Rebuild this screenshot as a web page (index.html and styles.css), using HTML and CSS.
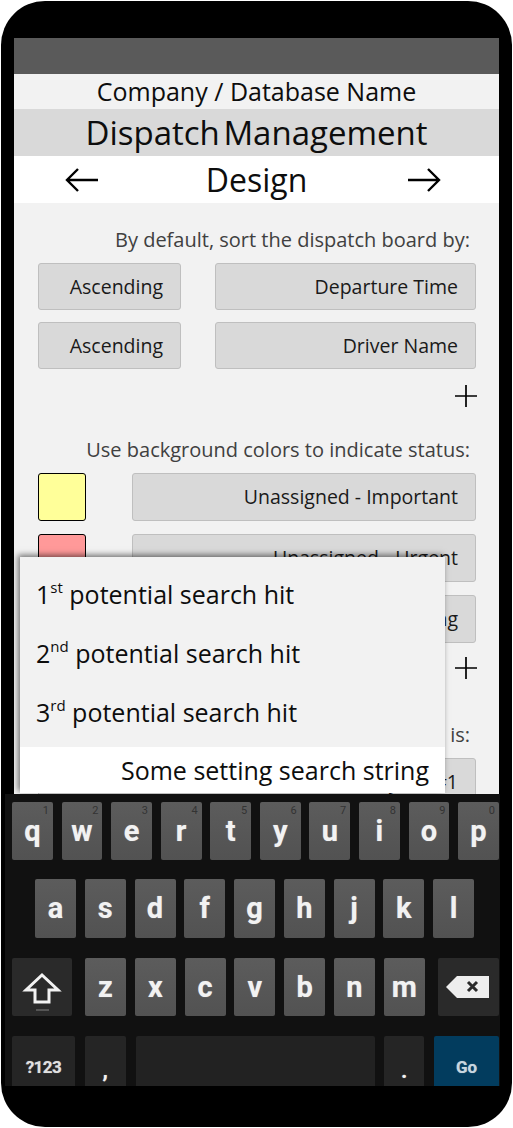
FILE: index.html
```html
<!DOCTYPE html>
<html>
<head>
<meta charset="utf-8">
<link rel="stylesheet" href="styles.css">
</head>
<body>
<div class="phone">
  <div class="screen">
    <div class="status"></div>
    <div class="company">Company / Database Name</div>
    <div class="app">Dispatch Management</div>
    <div class="nav">
      <svg class="arrow arrow-left" viewBox="0 0 34 26" width="34" height="26"><path d="M2 13 H33 M13 2 L2 13 L13 24" /></svg>
      <div class="nav-title">Design</div>
      <svg class="arrow arrow-right" viewBox="0 0 34 26" width="34" height="26"><path d="M1 13 H32 M21 2 L32 13 L21 24" /></svg>
    </div>
    <div class="content">
      <div class="label">By default, sort the dispatch board by:</div>
      <div class="sort-row">
        <div class="btn btn-order">Ascending</div>
        <div class="btn btn-field">Departure Time</div>
      </div>
      <div class="sort-row">
        <div class="btn btn-order">Ascending</div>
        <div class="btn btn-field">Driver Name</div>
      </div>
      <div class="add"><svg viewBox="0 0 24 24" width="24" height="24"><path d="M12 1 V23 M1 12 H23" /></svg></div>
      <div class="label label-2">Use background colors to indicate status:</div>
      <div class="color-row">
        <div class="swatch swatch-yellow"></div>
        <div class="btn btn-field">Unassigned - Important</div>
      </div>
      <div class="color-row">
        <div class="swatch swatch-red"></div>
        <div class="btn btn-field">Unassigned - Urgent</div>
      </div>
      <div class="color-row">
        <div class="swatch swatch-green"></div>
        <div class="btn btn-field">Assigned - Departing</div>
      </div>
      <div class="add add-2"><svg viewBox="0 0 24 24" width="24" height="24"><path d="M12 1 V23 M1 12 H23" /></svg></div>
      <div class="label label-3">Number of board columns is:</div>
      <div class="sort-row">
        <div class="btn btn-field">Layout #1</div>
      </div>
    </div>

    <div class="popup">
      <div class="hits">
        <div class="hit">1<sup>st</sup> potential search hit</div>
        <div class="hit">2<sup>nd</sup> potential search hit</div>
        <div class="hit">3<sup>rd</sup> potential search hit</div>
      </div>
      <div class="search">Some setting search string</div>
    </div>

    <div class="keyboard">
      <div class="kb-row kb-row-1">
        <div class="key">q<span class="hint">1</span></div>
        <div class="key">w<span class="hint">2</span></div>
        <div class="key">e<span class="hint">3</span></div>
        <div class="key">r<span class="hint">4</span></div>
        <div class="key">t<span class="hint">5</span></div>
        <div class="key">y<span class="hint">6</span></div>
        <div class="key">u<span class="hint">7</span></div>
        <div class="key">i<span class="hint">8</span></div>
        <div class="key">o<span class="hint">9</span></div>
        <div class="key">p<span class="hint">0</span></div>
      </div>
      <div class="kb-row kb-row-2">
        <div class="key">a</div>
        <div class="key">s</div>
        <div class="key">d</div>
        <div class="key">f</div>
        <div class="key">g</div>
        <div class="key">h</div>
        <div class="key">j</div>
        <div class="key">k</div>
        <div class="key">l</div>
      </div>
      <div class="kb-row kb-row-3">
        <div class="key key-dark key-shift">
          <svg viewBox="0 0 40 40" width="40" height="40"><path class="shift-arrow" d="M20 4 L36 19 H27 V31 H13 V19 H4 Z" /><path class="shift-bar" d="M14 39 H27" /></svg>
        </div>
        <div class="key">z</div>
        <div class="key">x</div>
        <div class="key">c</div>
        <div class="key">v</div>
        <div class="key">b</div>
        <div class="key">n</div>
        <div class="key">m</div>
        <div class="key key-dark key-back">
          <svg viewBox="0 0 44 22" width="44" height="22"><path class="back-shape" d="M0 11 L11 0 H43 V22 H11 Z" /><path class="back-x" d="M22 6 L31 15 M31 6 L22 15" /></svg>
        </div>
      </div>
      <div class="kb-row kb-row-4">
        <div class="key key-fn key-sym">?123</div>
        <div class="key key-fn key-comma">,</div>
        <div class="key key-fn key-space"></div>
        <div class="key key-fn key-period">.</div>
        <div class="key key-go">Go</div>
      </div>
    </div>
  </div>
</div>
</body>
</html>
```

FILE: styles.css
```css
* { box-sizing: border-box; }

html, body {
  margin: 0;
  padding: 0;
  background: #ffffff;
}

body {
  font-family: "Open Sans", "Noto Sans", sans-serif;
  color: #000;
}

.phone {
  margin: 1px 0 0 1px;
  width: 511px;
  height: 1126px;
  background: #000;
  border-radius: 44px;
  overflow: hidden;
  padding: 37px 0 0 13px;
}

.screen {
  position: relative;
  width: 485px;
  height: 1048px;
  background: #f2f2f2;
}

.status {
  height: 36px;
  background: #5a5a5a;
}

.company {
  height: 35px;
  line-height: 35px;
  background: #f2f2f2;
  text-align: center;
  font-size: 25px;
  color: #0d0d0d;
}

.app {
  height: 47px;
  line-height: 47px;
  background: #d9d9d9;
  text-align: center;
  font-size: 33px;
  word-spacing: -5px;
  color: #0d0d0d;
}

.nav {
  height: 47px;
  background: #fff;
  display: grid;
  grid-template-columns: 1fr auto 1fr;
  align-items: center;
}

.nav-title {
  font-size: 32px;
  line-height: 47px;
  color: #0d0d0d;
}

.arrow path {
  fill: none;
  stroke: #000;
  stroke-width: 2.4;
}

.arrow-left {
  margin-left: 51px;
}

.arrow-right {
  justify-self: end;
  margin-right: 58px;
}

.content {
  padding: 25px 23px 0 24px;
}

.label {
  text-align: right;
  padding-right: 6px;
  font-size: 20px;
  line-height: 24px;
  color: #404040;
  margin-bottom: 11px;
  white-space: nowrap;
}

.label-2 { margin-top: 30px; }
.label-3 { margin-top: 43px; }

.sort-row {
  display: flex;
  gap: 34px;
  height: 47px;
  margin-bottom: 12px;
}

.btn {
  background: #d9d9d9;
  border: 1px solid #bfbfbf;
  border-radius: 3px;
  text-align: right;
  padding-right: 17px;
  font-size: 19.5px;
  line-height: 45px;
  color: #1a1a1a;
  white-space: nowrap;
  overflow: hidden;
}

.btn-order { width: 143px; }
.btn-field { flex: 1; }

.add {
  height: 24px;
  margin-top: 15px;
  display: flex;
  justify-content: flex-end;
  margin-right: -2px;
}

.add svg path {
  fill: none;
  stroke: #000;
  stroke-width: 1.7;
}

.add-2 { margin-top: 13px; }

.color-row {
  display: flex;
  gap: 46px;
  height: 48px;
  margin-bottom: 13px;
}

.color-row .btn { line-height: 46px; }

.swatch {
  width: 48px;
  border: 1.5px solid #000;
  border-radius: 3px;
}

.swatch-yellow { background: #ffff99; }
.swatch-red { background: #ff9999; }
.swatch-green { background: #99ff99; }

/* search popup overlaid on the settings */
.popup {
  position: absolute;
  left: 6px;
  top: 519px;
  width: 425px;
  height: 236px;
  background: #f2f2f2;
  box-shadow: -2px -2px 6px rgba(0, 0, 0, 0.55);
  display: flex;
  flex-direction: column;
}

.hits {
  flex: 1;
  padding-top: 8px;
}

.hit {
  height: 59px;
  line-height: 59px;
  padding-left: 16px;
  font-size: 25px;
  color: #0d0d0d;
}

.hit sup {
  font-size: 15px;
  line-height: 0;
  vertical-align: 0;
  position: relative;
  top: -11px;
}

.search {
  height: 46px;
  line-height: 46px;
  background: #fff;
  text-align: right;
  padding-right: 16px;
  font-size: 25px;
  color: #0d0d0d;
}

/* on-screen keyboard */
.keyboard {
  position: absolute;
  left: -9px;
  top: 756px;
  width: 495px;
  height: 292px;
  background: #111;
  overflow: hidden;
  padding-top: 8px;
  font-family: Roboto, "Noto Sans", sans-serif;
}

.kb-row {
  display: flex;
  gap: 8.7px;
  height: 58px;
}

.kb-row-1 { margin: 0 1px 0 7px; }
.kb-row-2 { margin: 19px 0 0 30px; width: 439px; height: 59px; }
.kb-row-3 { margin: 20px 1px 0 7px; gap: 8.8px; }
.kb-row-4 { margin: 20px 1px 0 7px; gap: 9.75px; }

.key {
  position: relative;
  flex: 1;
  background: linear-gradient(#5c5c5c, #525252);
  border-radius: 2px;
  color: #f2f2f2;
  font-weight: 700;
  font-size: 29px;
  text-align: center;
  line-height: 58px;
  text-shadow: 0 0 1px rgba(255, 255, 255, 0.5);
}

.kb-row-3 .key { flex: 0 0 41px; }

.hint {
  position: absolute;
  top: 3px;
  right: 4px;
  font-size: 11px;
  line-height: 11px;
  font-weight: 400;
  color: #333;
  text-shadow: none;
}

.key-dark {
  background: #2a2a2a;
  display: flex;
  align-items: center;
  justify-content: center;
}

.kb-row-3 .key-shift { flex: 0 0 60px; margin-right: 4.2px; }
.kb-row-3 .key-back { flex: 0 0 61px; margin-left: 4.4px; }

.key-shift svg { margin-top: 8px; }

.shift-arrow {
  fill: none;
  stroke: #f2f2f2;
  stroke-width: 3;
  stroke-linejoin: miter;
}

.shift-bar {
  stroke: #555;
  stroke-width: 2;
}

.back-shape { fill: #eeeeee; }
.back-x {
  stroke: #2a2a2a;
  stroke-width: 3;
}

.key-fn {
  background: #252525;
  font-size: 17px;
  line-height: 58px;
}

.key-sym { flex: 0 0 63px; letter-spacing: -0.5px; color: #e0e0e0; padding-top: 2px; }
.key-comma { flex: 0 0 41px; font-size: 22px; line-height: 70px; }
.key-space { flex: 0 0 239px; background: #222; }
.key-period { flex: 0 0 40px; font-size: 22px; line-height: 70px; }

.key-go {
  flex: 0 0 65px;
  background: #023c5e;
  color: #c8d6df;
  font-size: 17px;
  line-height: 62px;
}
```
